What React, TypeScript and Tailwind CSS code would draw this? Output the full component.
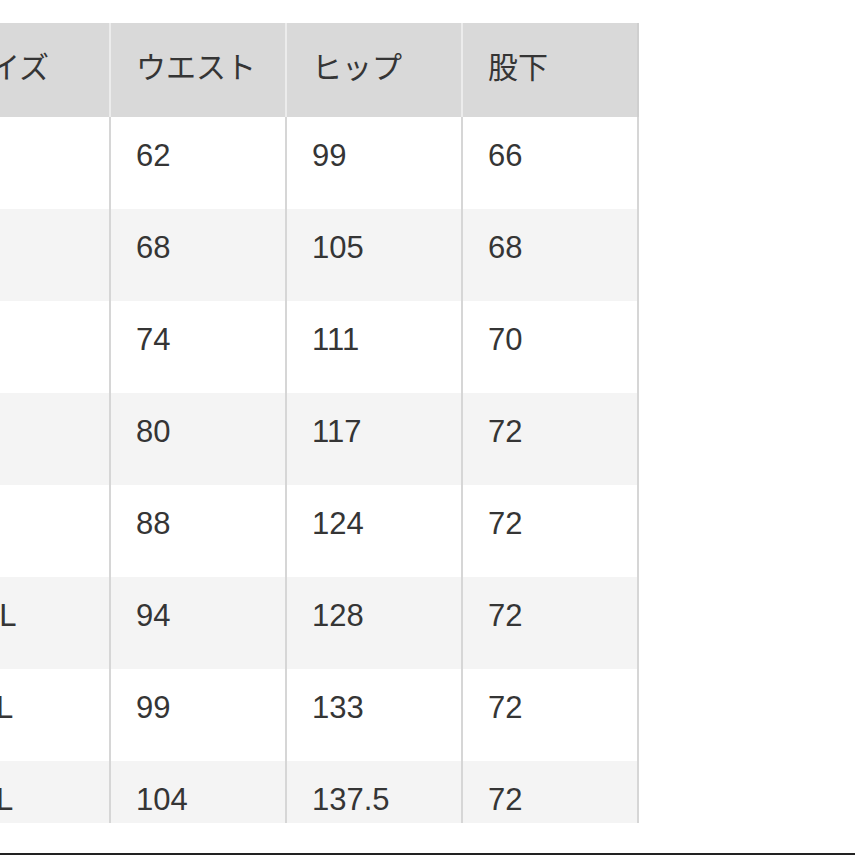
const rows = [
  { size: "XS", waist: "62", hip: "99", inseam: "66" },
  { size: "S", waist: "68", hip: "105", inseam: "68" },
  { size: "M", waist: "74", hip: "111", inseam: "70" },
  { size: "L", waist: "80", hip: "117", inseam: "72" },
  { size: "XL", waist: "88", hip: "124", inseam: "72" },
  { size: "XXL", waist: "94", hip: "128", inseam: "72" },
  { size: "3XL", waist: "99", hip: "133", inseam: "72" },
  { size: "4XL", waist: "104", hip: "137.5", inseam: "72" },
];

const headers = ["サイズ", "ウエスト", "ヒップ", "股下"];

export default function App() {
  return (
    <div
      className="relative h-[855px] w-[855px] overflow-hidden bg-white text-[#353535]"
      style={{ fontFamily: '"Liberation Sans", "Noto Sans CJK JP", sans-serif' }}
    >
      <div className="ml-[-65px] pt-[23px] h-[823px] w-[704px] overflow-hidden">
        {/* header */}
        <div className="flex h-[94px] bg-[#d9d9d9]">
          {headers.map((h, i) => (
            <div
              key={h}
              className={
                i === 3
                  ? "w-[176px] border-r-2 border-[#cfcfcf] pl-[25px] pt-[27px] text-[30px] leading-[36px]"
                  : "w-[176px] border-r-2 border-[#ececec] pl-[25px] pt-[27px] text-[30px] leading-[36px]"
              }
            >
              {h}
            </div>
          ))}
        </div>
        {/* body */}
        {rows.map((r, idx) => (
          <div
            key={r.size}
            className={idx % 2 === 1 ? "flex h-[92px] bg-[#f4f4f4]" : "flex h-[92px] bg-white"}
          >
            {[r.size, r.waist, r.hip, r.inseam].map((v, i) => (
              <div
                key={i}
                className={
                  i === 0
                    ? "w-[176px] border-r-2 border-[#d6d6d6] pl-[23px] pt-[21px] text-[31px] leading-[36px]"
                    : "w-[176px] border-r-2 border-[#d6d6d6] pl-[25px] pt-[21px] text-[31px] leading-[36px]"
                }
              >
                {v}
              </div>
            ))}
          </div>
        ))}
      </div>
      <div className="mt-[30px] h-[2px] bg-[#222]" />
    </div>
  );
}
